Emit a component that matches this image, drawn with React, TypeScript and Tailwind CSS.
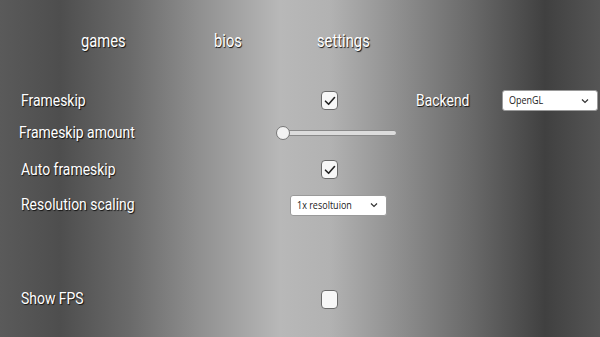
import React from "react";

function Check({ checked }: { checked: boolean }) {
  return (
    <div className="flex h-[19px] w-[17px] items-center justify-center rounded-[4px] border border-[#6b6b6b] bg-[#f7f7f7]">
      {checked && (
        <svg width="12" height="10" viewBox="0 0 12 10" fill="none">
          <path d="M1.5 5.2 L4.6 8.3 L10.5 1.5" stroke="#222" strokeWidth="1.6" strokeLinecap="round" strokeLinejoin="round" />
        </svg>
      )}
    </div>
  );
}

function Select({ label, width }: { label: string; width: string }) {
  return (
    <div
      className={`flex h-[21px] ${width} items-center justify-between rounded-[3px] border border-[#9a9a9a] bg-white pl-[6px] pr-[8px] font-['Open_Sans',sans-serif] text-[10px] text-[#222]`}
    >
      <span className="inline-block origin-left scale-x-[0.9]">{label}</span>
      <svg width="8" height="6" viewBox="0 0 8 6" fill="none">
        <path d="M1 1.5 L4 4.5 L7 1.5" stroke="#333" strokeWidth="1.2" />
      </svg>
    </div>
  );
}

function Label({ children, className = "" }: { children: React.ReactNode; className?: string }) {
  return (
    <div className={`shrink-0 text-white [text-shadow:1px_1px_1px_#111] ${className}`}>
      <span className="inline-block origin-left scale-x-[0.82] whitespace-nowrap">{children}</span>
    </div>
  );
}

export default function App() {
  return (
    <div className="relative h-[337px] w-[600px] overflow-hidden bg-[linear-gradient(90deg,#5a5a5a_0px,#4e4e4e_60px,#6a6a6a_130px,#909090_200px,#b8b8b8_280px,#b2b2b2_330px,#8e8e8e_400px,#6a6a6a_470px,#404040_545px,#555555_600px)] font-['Roboto',sans-serif] text-[17px]">
      {/* nav */}
      <div className="flex h-[82px] items-center pb-[2px] pl-[81px] text-[18px]">
        <Label className="w-[133px]">games</Label>
        <Label className="w-[103px]">bios</Label>
        <Label>settings</Label>
      </div>

      <div className="flex h-[37px] items-center">
        <Label className="w-[321px] pl-[21px]">Frameskip</Label>
        <Check checked />
        <Label className="w-[164px] pl-[78px]">Backend</Label>
        <Select label="OpenGL" width="w-[96px]" />
      </div>

      <div className="flex h-[28px] items-center">
        <Label className="w-[276px] pl-[19px]">Frameskip amount</Label>
        <div className="relative flex h-[14px] w-[121px] items-center">
          <div className="ml-[5px] h-[6px] w-[116px] rounded-full border border-[#8a8a8a] bg-[#dcdcdc]" />
          <div className="absolute left-0 top-0 h-[14px] w-[14px] rounded-full border border-[#777] bg-[#f2f2f2]" />
        </div>
      </div>

      <div className="flex h-[45px] items-center">
        <Label className="w-[321px] pl-[21px]">Auto frameskip</Label>
        <Check checked />
      </div>

      <div className="flex h-[26px] items-center">
        <Label className="w-[290px] pl-[21px]">Resolution scaling</Label>
        <Select label="1x resoltuion" width="w-[97px]" />
      </div>

      <div className="h-[68px]" />

      <div className="flex h-[26px] items-center">
        <Label className="w-[321px] pl-[21px]">Show FPS</Label>
        <Check checked={false} />
      </div>
    </div>
  );
}
